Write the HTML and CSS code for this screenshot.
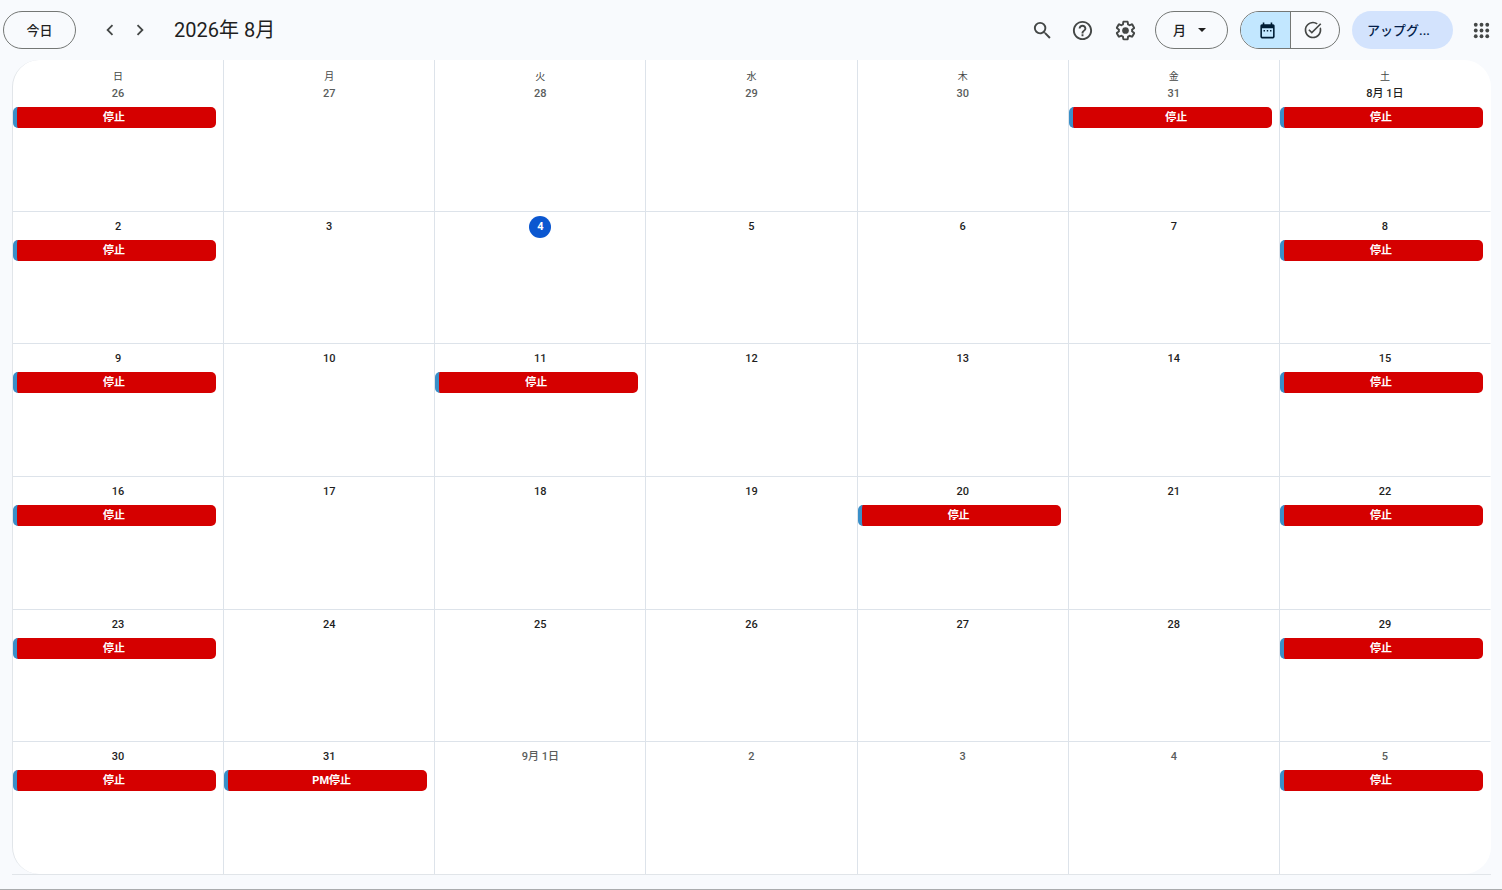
FILE: index.html
```html
<!DOCTYPE html>
<html lang="ja">
<head>
    <meta charset="UTF-8">
    <meta name="viewport" content="width=device-width, initial-scale=1.0">
    <title>カレンダー - 2026年 8月</title>
    <link rel="stylesheet" href="styles.css">
</head>
<body>
    <header class="header">
        <button class="pill today-button">今日</button>
        <div class="nav">
            <button class="nav-button" aria-label="前の月">
                <svg viewBox="0 0 24 24" width="22" height="22"><path d="M15.41 7.41L14 6l-6 6 6 6 1.41-1.41L10.83 12z"/></svg>
            </button>
            <button class="nav-button" aria-label="次の月">
                <svg viewBox="0 0 24 24" width="22" height="22"><path d="M10 6L8.59 7.41 13.17 12l-4.58 4.59L10 18l6-6z"/></svg>
            </button>
        </div>
        <h1 class="title">2026年 8月</h1>
        <div class="tools">
            <button class="icon-button" aria-label="検索">
                <svg viewBox="0 0 24 24" width="23" height="23"><path d="M15.5 14h-.79l-.28-.27A6.471 6.471 0 0 0 16 9.5 6.5 6.5 0 1 0 9.5 16c1.61 0 3.09-.59 4.23-1.57l.27.28v.79l5 4.99L20.49 19l-4.99-5zm-6 0C7.01 14 5 11.99 5 9.5S7.01 5 9.5 5 14 7.01 14 9.5 11.99 14 9.5 14z"/></svg>
            </button>
            <button class="icon-button" aria-label="サポート">
                <svg viewBox="0 0 24 24" width="23" height="23"><path d="M11 18h2v-2h-2v2zm1-16C6.48 2 2 6.48 2 12s4.48 10 10 10 10-4.48 10-10S17.52 2 12 2zm0 18c-4.41 0-8-3.59-8-8s3.59-8 8-8 8 3.59 8 8-3.59 8-8 8zm0-14c-2.21 0-4 1.79-4 4h2c0-1.1.9-2 2-2s2 .9 2 2c0 2-3 1.75-3 5h2c0-2.25 3-2.5 3-5 0-2.21-1.79-4-4-4z"/></svg>
            </button>
            <button class="icon-button settings-button" aria-label="設定">
                <svg viewBox="0 0 24 24" width="23" height="23"><path d="M13.85 22.25h-3.7c-.74 0-1.36-.54-1.45-1.27l-.27-1.89c-.27-.14-.53-.29-.79-.46l-1.8.72c-.7.26-1.47-.03-1.81-.65L2.2 15.53c-.35-.66-.2-1.44.36-1.88l1.53-1.19c-.01-.15-.02-.3-.02-.46 0-.15.01-.31.02-.46l-1.52-1.19c-.59-.45-.74-1.26-.37-1.88l1.85-3.19c.34-.62 1.11-.9 1.79-.63l1.81.73c.26-.17.52-.32.78-.46l.27-1.91c.09-.7.71-1.25 1.44-1.25h3.7c.74 0 1.36.54 1.45 1.27l.27 1.89c.27.14.53.29.79.46l1.8-.72c.71-.26 1.48.03 1.82.65l1.84 3.18c.36.66.2 1.44-.36 1.88l-1.52 1.19c.01.15.02.3.02.46s-.01.31-.02.46l1.52 1.19c.56.45.72 1.23.37 1.86l-1.86 3.22c-.34.62-1.11.9-1.8.63l-1.8-.72c-.26.17-.52.32-.78.46l-.27 1.91c-.1.68-.72 1.22-1.46 1.22zm-3.23-2h2.76l.37-2.55.53-.22c.44-.18.88-.44 1.34-.78l.45-.34 2.38.96 1.38-2.4-2.03-1.58.07-.56c.03-.26.06-.51.06-.78s-.03-.53-.06-.78l-.07-.56 2.03-1.58-1.39-2.4-2.39.96-.45-.35c-.42-.32-.87-.58-1.33-.77l-.52-.22-.37-2.55h-2.76l-.37 2.55-.53.21c-.44.19-.88.44-1.34.79l-.45.33-2.38-.95-1.39 2.39 2.03 1.58-.07.56a7 7 0 0 0-.06.79c0 .26.02.53.06.78l.07.56-2.03 1.58 1.38 2.4 2.39-.96.45.35c.43.33.86.58 1.33.77l.53.22.38 2.55z"/><circle cx="12" cy="12" r="3.500"/></svg>
            </button>
            <div class="view-picker">
                <select class="pill view-select" aria-label="表示形式">
                    <option>日</option>
                    <option>週</option>
                    <option selected>月</option>
                    <option>年</option>
                </select>
                <svg class="view-arrow" viewBox="0 0 8 4" width="8" height="4"><path d="M0 0h8L4 4z"/></svg>
            </div>
            <div class="switch">
                <button class="switch-button active" aria-label="カレンダー" aria-pressed="true">
                    <svg viewBox="0 0 24 24" width="19" height="19"><path d="M19 4h-1V2h-2v2H8V2H6v2H5a2 2 0 0 0-2 2v14c0 1.100.9 2 2 2h14c1.100 0 2-.9 2-2V6c0-1.100-.9-2-2-2zm0 16H5V9h14v11zM7 11.500h1.800v1.800H7zM11.100 11.500h1.800v1.800h-1.800zM15.200 11.500h1.800v1.800h-1.800z"/></svg>
                </button>
                <button class="switch-button" aria-label="タスク" aria-pressed="false">
                    <svg viewBox="0 0 24 24" width="20" height="20"><path d="M22 5.180L10.590 16.600l-4.240-4.240 1.410-1.410 2.830 2.830 10-10L22 5.180zM19.790 10.220c.13.570.21 1.170.21 1.780 0 4.420-3.580 8-8 8s-8-3.580-8-8 3.580-8 8-8c1.580 0 3.040.46 4.280 1.250l1.440-1.440A9.900 9.900 0 0 0 12 2C6.480 2 2 6.480 2 12s4.480 10 10 10 10-4.480 10-10c0-1.190-.22-2.330-.6-3.390l-1.610 1.610z"/></svg>
                </button>
            </div>
            <button class="upgrade-button">アップグ...</button>
            <button class="icon-button apps-button" aria-label="アプリ">
                <svg viewBox="0 0 24 24" width="23" height="23"><g><circle cx="6" cy="6" r="2"/><circle cx="12" cy="6" r="2"/><circle cx="18" cy="6" r="2"/><circle cx="6" cy="12" r="2"/><circle cx="12" cy="12" r="2"/><circle cx="18" cy="12" r="2"/><circle cx="6" cy="18" r="2"/><circle cx="12" cy="18" r="2"/><circle cx="18" cy="18" r="2"/></g></svg>
            </button>
        </div>
    </header>
    <main class="calendar">
        <table class="month">
            <thead>
                <tr>
                    <th>日</th>
                    <th>月</th>
                    <th>火</th>
                    <th>水</th>
                    <th>木</th>
                    <th>金</th>
                    <th>土</th>
                </tr>
            </thead>
            <tbody>
                <tr>
                    <td class="other"><span class="date">26</span><button class="event">停止</button></td>
                    <td class="other"><span class="date">27</span></td>
                    <td class="other"><span class="date">28</span></td>
                    <td class="other"><span class="date">29</span></td>
                    <td class="other"><span class="date">30</span></td>
                    <td class="other"><span class="date">31</span><button class="event event-indent">停止</button></td>
                    <td><span class="date">8月 1日</span><button class="event">停止</button></td>
                </tr>
                <tr>
                    <td><span class="date">2</span><button class="event">停止</button></td>
                    <td><span class="date">3</span></td>
                    <td><span class="date today">4</span></td>
                    <td><span class="date">5</span></td>
                    <td><span class="date">6</span></td>
                    <td><span class="date">7</span></td>
                    <td><span class="date">8</span><button class="event">停止</button></td>
                </tr>
                <tr>
                    <td><span class="date">9</span><button class="event">停止</button></td>
                    <td><span class="date">10</span></td>
                    <td><span class="date">11</span><button class="event">停止</button></td>
                    <td><span class="date">12</span></td>
                    <td><span class="date">13</span></td>
                    <td><span class="date">14</span></td>
                    <td><span class="date">15</span><button class="event">停止</button></td>
                </tr>
                <tr>
                    <td><span class="date">16</span><button class="event">停止</button></td>
                    <td><span class="date">17</span></td>
                    <td><span class="date">18</span></td>
                    <td><span class="date">19</span></td>
                    <td><span class="date">20</span><button class="event">停止</button></td>
                    <td><span class="date">21</span></td>
                    <td><span class="date">22</span><button class="event">停止</button></td>
                </tr>
                <tr>
                    <td><span class="date">23</span><button class="event">停止</button></td>
                    <td><span class="date">24</span></td>
                    <td><span class="date">25</span></td>
                    <td><span class="date">26</span></td>
                    <td><span class="date">27</span></td>
                    <td><span class="date">28</span></td>
                    <td><span class="date">29</span><button class="event">停止</button></td>
                </tr>
                <tr>
                    <td><span class="date">30</span><button class="event">停止</button></td>
                    <td><span class="date">31</span><button class="event event-indent">PM停止</button></td>
                    <td class="other"><span class="date">9月 1日</span></td>
                    <td class="other"><span class="date">2</span></td>
                    <td class="other"><span class="date">3</span></td>
                    <td class="other"><span class="date">4</span></td>
                    <td class="other"><span class="date">5</span><button class="event">停止</button></td>
                </tr>
            </tbody>
        </table>
    </main>
</body>
</html>
```

FILE: styles.css
```css
* {
    box-sizing: border-box;
}
body {
    font-family: Roboto, "Noto Sans CJK JP", sans-serif;
    background-color: #f8fafd;
    color: #1f1f1f;
    display: flex;
    flex-direction: column;
    min-height: 100vh;
    margin: 0;
    border-bottom: 1px solid #aaacae;
}
button, select {
    font-family: inherit;
    font-size: 13px;
    font-weight: 500;
    color: #1f1f1f;
    margin: 0;
    padding: 0;
    border: none;
    background: none;
    cursor: pointer;
}
svg {
    display: block;
    fill: currentColor;
}

/* Header */
.header {
    display: flex;
    align-items: center;
    height: 60px;
    padding: 0 1px 0 3px;
}
.pill {
    width: 73px;
    height: 38px;
    border: 1px solid #747775;
    border-radius: 19px;
}
.today-button {
    padding-bottom: 2px;
}
.nav {
    display: flex;
    margin-left: 19px;
}
.nav-button {
    display: flex;
    align-items: center;
    justify-content: center;
    width: 30px;
    height: 30px;
    color: #444746;
}
.title {
    margin: 0 0 0 19px;
    font-size: 20px;
    font-weight: 400;
    line-height: 28px;
    white-space: nowrap;
}
.tools {
    display: flex;
    align-items: center;
    margin-left: auto;
}
.icon-button {
    display: flex;
    align-items: center;
    justify-content: center;
    width: 40px;
    height: 40px;
    color: #444746;
}
.settings-button {
    margin: 0 10px 0 3px;
}
.view-picker {
    position: relative;
}
.view-select {
    display: block;
    appearance: none;
    padding-left: 17px;
}
.view-arrow {
    position: absolute;
    top: 17px;
    right: 22px;
    pointer-events: none;
}
.switch {
    display: flex;
    width: 100px;
    height: 38px;
    margin: 0 12px;
    border: 1px solid #747775;
    border-radius: 19px;
    overflow: hidden;
}
.switch-button {
    display: flex;
    flex: 1;
    align-items: center;
    justify-content: center;
    padding-right: 4px;
    color: #444746;
}
.switch-button.active {
    flex: none;
    width: 50px;
    padding: 0 0 0 3px;
    background-color: #c2e7ff;
    color: #001d35;
    border-right: 1px solid #747775;
}
.upgrade-button {
    width: 101px;
    height: 38px;
    padding: 0 8px 2px 0;
    border-radius: 19px;
    background-color: #d3e3fd;
    color: #041e49;
}
.apps-button {
    margin-left: 8px;
}

/* Month grid */
.calendar {
    display: flex;
    flex: 1;
    margin: 0 11px 14px 12px;
    border-bottom: 1px solid #e1e5e9;
}
.month {
    display: flex;
    flex-direction: column;
    flex: 1;
    background-color: #fff;
    border-left: 1px solid #e1e5e9;
    border-radius: 27px;
}
.month thead {
    display: block;
    height: 18px;
}
.month tbody {
    display: grid;
    grid-template-rows: repeat(6, 1fr);
    flex: 1;
}
.month tr {
    display: grid;
    grid-template-columns: repeat(7, 1fr);
}
.month th {
    padding: 9px 0 0;
    font-size: 10px;
    font-weight: 400;
    line-height: 16px;
    color: #444746;
    text-align: center;
    border-right: 1px solid #dde3ea;
}
.month td {
    display: flex;
    flex-direction: column;
    align-items: center;
    padding: 4px 0 0;
    border-top: 1px solid #dde3ea;
    border-right: 1px solid #dde3ea;
}
.month tbody tr:first-child td {
    border-top-color: transparent;
}
.month th:last-child,
.month td:last-child {
    border-right-color: transparent;
}
.date {
    height: 22px;
    font-size: 11px;
    font-weight: 500;
    line-height: 22px;
}
.other .date {
    color: #5a5d5c;
}
.date.today {
    width: 22px;
    border-radius: 50%;
    background-color: #0b57d0;
    color: #fff;
    font-weight: 700;
    text-align: center;
}
.event {
    align-self: stretch;
    height: 21px;
    margin: 2px 7px 0 0;
    padding-right: 5px;
    border-left: 4px solid #3a8fc8;
    border-radius: 5px;
    background-color: #d50000;
    color: #fff;
    font-size: 11px;
    font-weight: 700;
    line-height: 21px;
    text-align: center;
}
.event-indent {
    padding: 0 0 0 8px;
}
```
